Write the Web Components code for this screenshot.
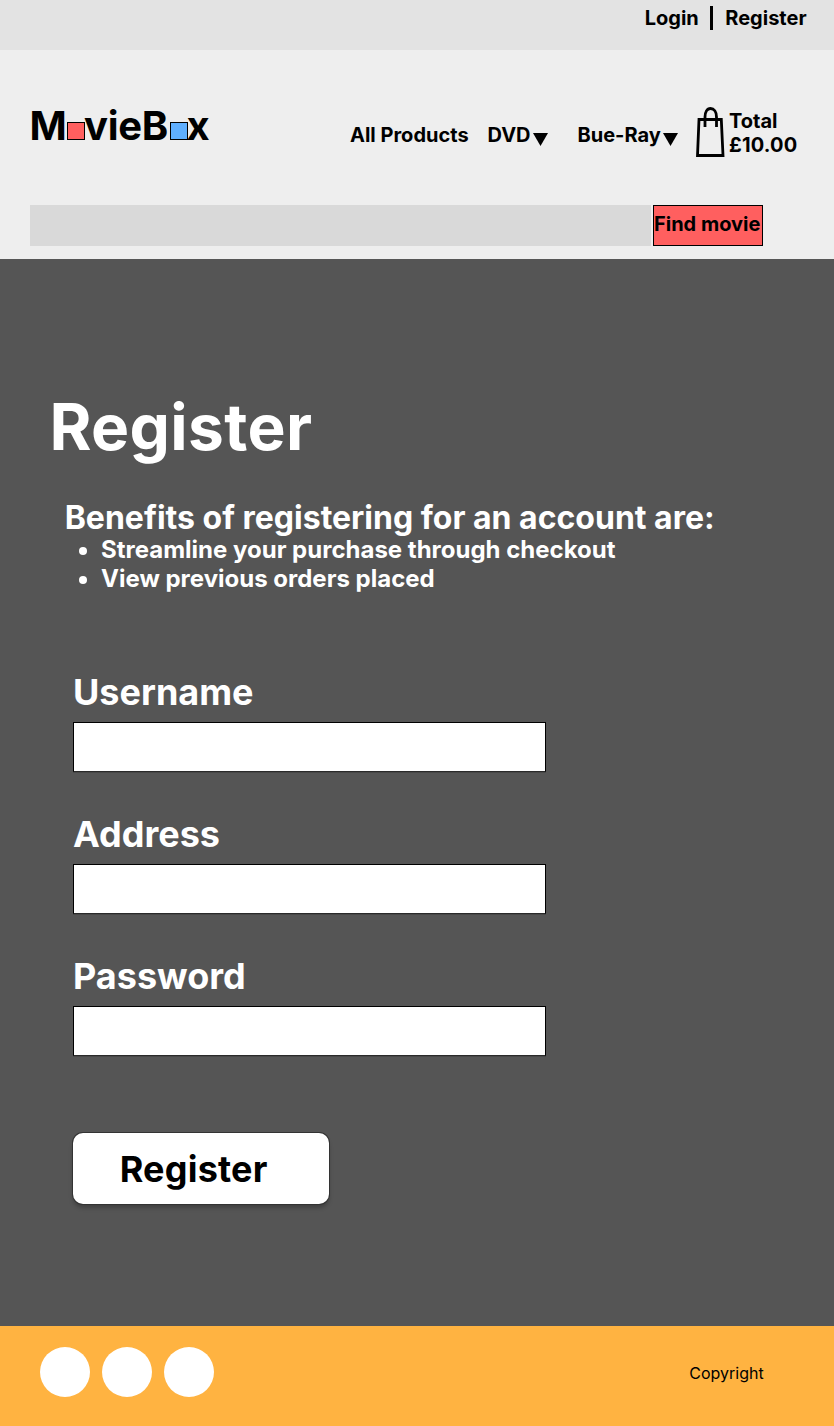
<!DOCTYPE html>
<html lang="en">
<head>
<meta charset="utf-8">
<title>MovieBox - Register</title>
<style>
body{margin:0;background:#555;font-family:Inter,"Liberation Sans",sans-serif;font-weight:700;color:#000}
</style>
</head>
<body>
<movie-page></movie-page>
<script>
const define = (name, html) => {
  const t = document.createElement('template');
  t.innerHTML = html;
  customElements.define(name, class extends HTMLElement {
    constructor() {
      super();
      this.attachShadow({ mode: 'open' }).append(t.content.cloneNode(true));
    }
  });
};

define('account-bar', `
<style>
:host{display:flex;height:50px;background:#e3e3e3;box-sizing:border-box;padding:6px 0 0 644.700px;font-size:20px;line-height:24px;white-space:pre}
.a{width:65.500px}.b{width:3px;height:24px;background:#000;margin:-.5px 11.800px 0 .3px}
</style><span class="a">Login</span><i class="b"></i><span>Register</span>`);

define('movie-logo', `
<style>
:host{display:flex;align-items:flex-end;height:48px;font-size:40px;line-height:48px;white-space:nowrap}
i{box-sizing:border-box;width:18px;height:18px;border:1px solid #000;margin-bottom:10px;flex:none}
.r{background:#ff5f5f}.b{background:#5fafff}
.m{width:37.500px}.v{width:86px;margin-left:-1px;letter-spacing:-.3px}.x{margin-left:-1.500px}
</style><span class="m">M</span><i class="r"></i><span class="v">vieB</span><i class="b"></i><span class="x">x</span>`);

define('nav-item', `
<style>
:host{display:flex;font-size:20px;line-height:24px;white-space:nowrap}
svg{display:none;margin:10px 0 0 2px}
:host([menu]) svg{display:block}
</style><slot></slot><svg width="15" height="13" viewBox="0 0 15 13"><path d="M0 0h15L7.5 13z"/></svg>`);

define('basket-total', `
<style>
:host{display:flex;font-size:20px;line-height:24px;white-space:nowrap}
svg{margin-right:4px;flex:none}
.t{padding-top:2px}.n{letter-spacing:.15px}
</style>
<svg width="29" height="51" viewBox="0 0 29 51" fill="none" stroke="#000" stroke-width="2.8"><path d="M3 12.500H25.3L27 48.500H1.5Z"/><path d="M9 20V10C9 5 11 1.500 14.5 1.500S20.500 5 20.500 10V20"/></svg>
<div class="t"><div>Total</div><div class="n">£10.00</div></div>`);

define('search-bar', `
<style>
:host{display:flex;height:41px;gap:2px}
.f{width:621px;background:#d9d9d9}
.g{box-sizing:border-box;width:110px;border:1px solid #000;background:#ff5f5f;font-size:20px;line-height:24px;padding-top:6px;white-space:nowrap}
</style><div class="f"></div><div class="g">Find movie</div>`);

define('site-header', `
<style>
:host{display:block;height:209px;background:#eee;box-sizing:border-box;padding:52px 0 0 28px}
.top{display:flex;height:103px}
movie-logo{width:320.500px;margin-left:1.500px}
nav{display:flex;padding-top:21px}
.p{width:137.500px}.d{width:90px}.u{width:118.500px}
basket-total{margin-top:5px}
search-bar{margin-left:2px}
</style>
<div class="top"><movie-logo></movie-logo>
<nav><nav-item class="p">All Products</nav-item><nav-item class="d" menu>DVD</nav-item><nav-item class="u" menu>Bue-Ray</nav-item></nav>
<basket-total></basket-total></div>
<search-bar></search-bar>`);

define('form-field', `
<style>
:host{display:block;height:142px;font-size:36px;line-height:44px}
.i{box-sizing:border-box;width:473px;height:50px;margin-top:8px;background:#fff;border:1px solid #000;border-bottom-color:#2a2a2a;box-shadow:0 1px 0 #484848}
</style><div><slot></slot></div><div class="i"></div>`);

define('register-button', `
<style>
:host{display:block;box-sizing:border-box;width:256px;height:71px;border-radius:10px;background:#fff;color:#000;box-shadow:0 0 0 1px #333,0 4px 4px rgba(0,0,0,.25);padding:14px 0 0 46.700px;font-size:36px;line-height:44px;letter-spacing:.2px}
</style><slot></slot>`);

define('register-panel', `
<style>
:host{display:block;box-sizing:border-box;height:1067px;background:#555;color:#fff;padding:129px 0 0 47px;white-space:nowrap}
h1{margin:0 0 0 2.500px;font-size:64px;line-height:77px;letter-spacing:.35px}
h2{margin:33px 0 0 17.700px;font-size:32px;line-height:39px}
ul{margin:-2px 0 0 18px;padding:0 0 0 36px;font-size:24px;line-height:29px}
form{margin:77px 0 0 26px}
register-button{margin-top:37px}
</style>
<h1>Register</h1>
<h2>Benefits of registering for an account are:</h2>
<ul><li>Streamline your purchase through checkout</li><li>View previous orders placed</li></ul>
<form><form-field>Username</form-field><form-field>Address</form-field><form-field>Password</form-field>
<register-button>Register</register-button></form>`);

define('site-footer', `
<style>
:host{display:flex;box-sizing:border-box;height:100px;background:#ffb341;padding:21px 0 0 40.400px;font-size:16px;line-height:19px;font-weight:400}
i{width:50px;height:50px;border-radius:50%;background:#fff;margin-right:11.300px}
i+i{margin-right:12.300px}
span{margin:17px 0 0 463px}
</style><i></i><i></i><i></i><span>Copyright</span>`);

define('movie-page', `
<style>:host{display:block;width:834px}</style>
<account-bar></account-bar><site-header></site-header><register-panel></register-panel><site-footer></site-footer>`);
</script>
</body>
</html>
